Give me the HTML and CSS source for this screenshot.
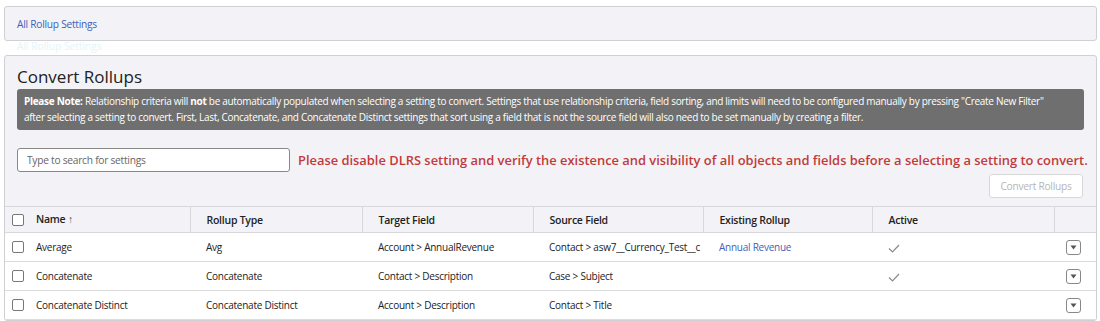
FILE: index.html
```html
<!DOCTYPE html>
<html lang="en">
<head>
    <meta charset="UTF-8">
    <title>Convert Rollups</title>
    <link rel="stylesheet" href="styles.css">
</head>
<body>

<!-- Breadcrumb card -->
<div class="card nav-card">
    <a href="#" class="crumb">All Rollup Settings</a>
</div>
<div class="ghost">All Rollup Settings</div>

<!-- Convert section -->
<div class="card convert-card">
    <h2>Convert Rollups</h2>
    <div class="note">
        <b>Please Note:</b> Relationship criteria will <b>not</b> be automatically populated when selecting a setting to convert. Settings that use relationship criteria, field sorting, and limits will need to be configured manually by pressing "Create New Filter"<br>
        after selecting a setting to convert. First, Last, Concatenate, and Concatenate Distinct settings that sort using a field that is not the source field will also need to be set manually by creating a filter.
    </div>

    <div class="search-row">
        <input type="text" class="search" placeholder="Type to search for settings">
        <span class="warning">Please disable DLRS setting and verify the existence and visibility of all objects and fields before a selecting a setting to convert.</span>
    </div>

    <div class="actions">
        <button class="btn" disabled>Convert Rollups</button>
    </div>

    <table class="grid">
        <thead>
            <tr>
                <th class="col-name"><span class="check"></span>Name <span class="arrow">&#8593;</span></th>
                <th class="col-type">Rollup Type</th>
                <th class="col-target">Target Field</th>
                <th class="col-source">Source Field</th>
                <th class="col-existing">Existing Rollup</th>
                <th class="col-active">Active</th>
                <th class="col-menu"></th>
            </tr>
        </thead>
        <tbody>
            <tr>
                <td><span class="check"></span>Average</td>
                <td>Avg</td>
                <td>Account &gt; AnnualRevenue</td>
                <td>Contact &gt; asw7__Currency_Test__c</td>
                <td><a href="#" class="link">Annual Revenue</a></td>
                <td><svg class="tick" width="12" height="9" viewBox="0 0 12 9"><path d="M1 4.5 L4.5 8 L11 1" fill="none" stroke="#8a8a8a" stroke-width="1.2"/></svg></td>
                <td class="menu"><span class="drop"><svg width="7" height="5" viewBox="0 0 7 5"><path d="M0.5 0.5 H6.5 L3.5 4.5 Z" fill="#555"/></svg></span></td>
            </tr>
            <tr>
                <td><span class="check"></span>Concatenate</td>
                <td>Concatenate</td>
                <td>Contact &gt; Description</td>
                <td>Case &gt; Subject</td>
                <td></td>
                <td><svg class="tick" width="12" height="9" viewBox="0 0 12 9"><path d="M1 4.5 L4.5 8 L11 1" fill="none" stroke="#8a8a8a" stroke-width="1.2"/></svg></td>
                <td class="menu"><span class="drop"><svg width="7" height="5" viewBox="0 0 7 5"><path d="M0.5 0.5 H6.5 L3.5 4.5 Z" fill="#555"/></svg></span></td>
            </tr>
            <tr>
                <td><span class="check"></span>Concatenate Distinct</td>
                <td>Concatenate Distinct</td>
                <td>Account &gt; Description</td>
                <td>Contact &gt; Title</td>
                <td></td>
                <td></td>
                <td class="menu"><span class="drop"><svg width="7" height="5" viewBox="0 0 7 5"><path d="M0.5 0.5 H6.5 L3.5 4.5 Z" fill="#555"/></svg></span></td>
            </tr>
        </tbody>
    </table>
</div>

</body>
</html>
```

FILE: styles.css
```css
body {
    margin: 0;
    padding: 6px 3px 0 4px;
    font-family: 'Open Sans', 'Noto Sans', sans-serif;
    font-size: 11px;
    color: #222;
    background: #fff;
    overflow: hidden;
}

/* Cards */
.card {
    background-color: #f3f3f7;
    border: 1px solid #cfcfd4;
    border-radius: 3px;
}

.nav-card {
    height: 33px;
    display: flex;
    align-items: center;
    padding-left: 12px;
}

.crumb {
    color: #3f5fb8;
    text-decoration: none;
    font-size: 10.2px;
    letter-spacing: -0.25px;
}

.ghost {
    height: 14px;
    padding-left: 13px;
    font-size: 10.2px;
    line-height: 10px;
    color: #e4f4f8;
}

.convert-card {
    overflow: hidden;
}

h2 {
    font-weight: normal;
    font-size: 17px;
    margin: 0;
    padding: 9px 12px 0 12px;
    height: 24px;
    color: #222;
}

/* Gray note box */
.note {
    margin: 0 12px;
    background-color: #6f6f6f;
    color: #fff;
    border-radius: 3px;
    padding: 4px 7px 5px 7px;
    font-size: 10px;
    letter-spacing: -0.3px;
    line-height: 16px;
    white-space: nowrap;
}

/* Search and warning */
.search-row {
    display: flex;
    align-items: center;
    gap: 8px;
    padding: 18px 12px 0 12px;
}

.search {
    flex-shrink: 0;
    width: 273px;
    height: 24px;
    box-sizing: border-box;
    border: 1px solid #888;
    border-radius: 3px;
    padding: 0 9px;
    font-family: inherit;
    font-size: 10.2px;
    letter-spacing: -0.25px;
    background: #fff;
}

.search::placeholder {
    color: #666;
}

.warning {
    color: #c23a3a;
    font-weight: 600;
    font-size: 12.9px;
    white-space: nowrap;
}

.actions {
    display: flex;
    justify-content: flex-end;
    padding: 2px 13px 8px 12px;
}

.btn {
    width: 94px;
    height: 24px;
    background: #fff;
    border: 1px solid #d8d8d8;
    border-radius: 3px;
    color: #b5b5b5;
    font-family: inherit;
    font-size: 10.2px;
    letter-spacing: -0.25px;
}

/* Table */
.grid {
    width: 100%;
    border-collapse: collapse;
    table-layout: fixed;
}

.grid th,
.grid td {
    box-sizing: border-box;
    padding: 0 0 0 16px;
    text-align: left;
    white-space: nowrap;
    overflow: hidden;
}

.grid th {
    background: #f3f3f7;
    height: 26px;
    font-weight: 600;
    font-size: 10.5px;
    letter-spacing: -0.25px;
    border-top: 1px solid #d8d8dc;
    border-bottom: 1px solid #d8d8dc;
    border-left: 1px solid #d8d8dc;
}

.grid th:first-child {
    border-left: none;
}

.grid td {
    background: #fff;
    height: 29px;
    border-bottom: 1px solid #dcdcdc;
    font-size: 10px;
    letter-spacing: -0.25px;
}

.grid th:first-child,
.grid td:first-child {
    padding-left: 7px;
}

.col-name { width: 185px; }
.col-type { width: 172px; }
.col-target { width: 171px; }
.col-source { width: 170px; }
.col-existing { width: 169px; }
.col-active { width: 182px; }
.col-menu { width: 42px; }

.check {
    display: inline-block;
    width: 10px;
    height: 10px;
    border: 1px solid #777;
    border-radius: 2px;
    background: #fff;
    vertical-align: middle;
    margin-right: 12px;
    position: relative;
    top: -1px;
}

.arrow {
    font-weight: normal;
    color: #555;
}

.link {
    color: #3f5fb8;
    text-decoration: none;
}

.tick {
    vertical-align: middle;
}

.grid td.menu {
    padding-left: 12px;
}

.drop {
    display: inline-flex;
    align-items: center;
    justify-content: center;
    width: 13px;
    height: 13px;
    border: 1px solid #888;
    border-radius: 3px;
    vertical-align: middle;
}
```
